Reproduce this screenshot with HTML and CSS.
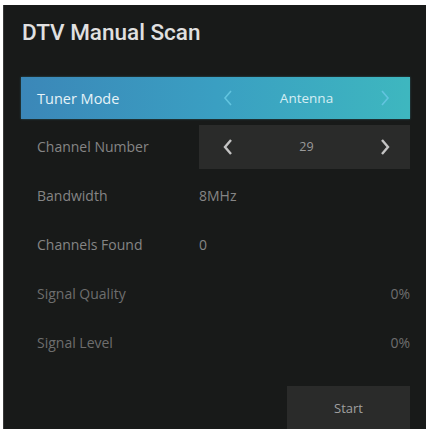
FILE: index.html
```html
<!DOCTYPE html>
<html lang="en">
  <head>
    <meta charset="UTF-8" />
    <meta name="viewport" content="width=device-width, initial-scale=1.0" />
    <title>DTV Manual Scan</title>
    <link rel="stylesheet" href="styles.css">
  </head>
  <body>
    <div class="panel">
      <h2 class="title">DTV Manual Scan</h2>

      <div class="rows">
        <div class="row row-active">
          <span class="label">Tuner Mode</span>
          <div class="picker">
            <svg class="arrow" viewBox="0 0 10 16"><polyline points="8,1 2,8 8,15" /></svg>
            <span class="picker-value">Antenna</span>
            <svg class="arrow" viewBox="0 0 10 16"><polyline points="2,1 8,8 2,15" /></svg>
          </div>
        </div>

        <div class="row">
          <span class="label">Channel Number</span>
          <div class="picker picker-box">
            <svg class="arrow" viewBox="0 0 10 16"><polyline points="8,1 2,8 8,15" /></svg>
            <span class="picker-value">29</span>
            <svg class="arrow" viewBox="0 0 10 16"><polyline points="2,1 8,8 2,15" /></svg>
          </div>
        </div>

        <div class="row">
          <span class="label">Bandwidth</span>
          <span class="value">8MHz</span>
        </div>

        <div class="row">
          <span class="label">Channels Found</span>
          <span class="value">0</span>
        </div>

        <div class="row row-dim">
          <span class="label">Signal Quality</span>
          <span class="value value-right">0%</span>
        </div>

        <div class="row row-dim">
          <span class="label">Signal Level</span>
          <span class="value value-right">0%</span>
        </div>
      </div>

      <div class="actions">
        <button class="start">Start</button>
      </div>
    </div>
  </body>
</html>
```

FILE: styles.css
```css
html,
body {
  height: 100%;
}
body {
  margin: 0;
  background: #ffffff;
  font-family: "Open Sans", "Noto Sans", Arial, sans-serif;
  overflow: hidden;
}
.panel {
  box-sizing: border-box;
  height: calc(100% - 5px);
  margin: 5px 0 0 3px;
  padding: 0 16px 0 17px;
  background: #181a19;
  border-left: 1px solid #3a3a3a;
  display: flex;
  flex-direction: column;
}
.title {
  margin: 0;
  padding: 14px 0 0 1px;
  height: 69px;
  box-sizing: border-box;
  font-family: Roboto, "Noto Sans", sans-serif;
  font-size: 22.5px;
  font-weight: 500;
  color: #e0e0e0;
}
.rows {
  display: flex;
  flex-direction: column;
}
.row {
  height: 49px;
  display: grid;
  grid-template-columns: 178px 1fr;
  align-items: center;
  font-size: 14px;
  color: #858585;
}
.row-dim {
  color: #6e6e6e;
}
.label {
  padding-left: 16px;
}
.row-active {
  height: 42px;
  margin: 3px 0;
  background: linear-gradient(90deg, #3b87b8 0%, #3a9fc2 50%, #3eb7bf 100%);
  box-shadow: 0 0 2px rgba(80, 200, 220, 0.4);
}
.row-active .label {
  color: #e6f3f8;
  font-size: 14.5px;
}
.picker {
  height: 100%;
  display: flex;
  align-items: center;
  justify-content: space-between;
  padding: 0 20px 0 24px;
}
.picker-box {
  height: 44px;
  background: #2a2b2a;
  color: #9a9a9a;
}
.arrow {
  width: 10px;
  height: 16px;
  fill: none;
  stroke: #c4c4c4;
  stroke-width: 2.4;
}
.row-active .arrow {
  stroke: #62c4df;
  stroke-width: 1.6;
}
.picker-value {
  font-size: 12.5px;
}
.row-active .picker-value {
  font-size: 13.5px;
  color: #d6eef4;
}
.value-right {
  text-align: right;
}
.actions {
  flex: 1;
  display: flex;
  justify-content: flex-end;
  align-items: flex-end;
}
.start {
  width: 123px;
  height: 43px;
  border: none;
  background: #2a2b2a;
  color: #a0a0a0;
  font-family: inherit;
  font-size: 13px;
}
```
